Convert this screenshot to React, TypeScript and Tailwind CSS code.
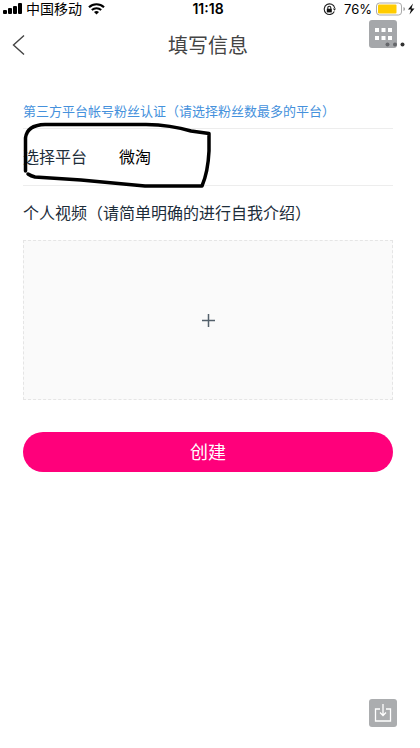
import React from 'react';

function StatusBar() {
  return (
    <div className="grid h-[18px] grid-cols-[1fr_auto_1fr] items-center text-black">
      <div className="flex items-center pl-[3px]">
        <svg width="19" height="12" viewBox="0 0 19 12" aria-hidden="true">
          <rect x="0" y="7" width="4" height="4" rx="1" />
          <rect x="5" y="5" width="4" height="6" rx="1" />
          <rect x="10" y="3" width="4" height="8" rx="1" />
          <rect x="15" y="0" width="4" height="11" rx="1" />
        </svg>
        <span className="ml-1 text-[14px] leading-[18px]">中国移动</span>
        <svg className="ml-1.5" width="17" height="12" viewBox="0 0 17 12" fill="none" stroke="#000" aria-hidden="true">
          <path d="M1 4.2a11 11 0 0 1 15 0" strokeWidth="2.2" />
          <path d="M3.8 7a7 7 0 0 1 9.4 0" strokeWidth="2" />
          <path d="M6 9a4 4 0 0 1 5 0L8.500 11.600z" fill="#000" stroke="none" />
        </svg>
      </div>
      <time className="font-['Inter','Liberation_Sans',sans-serif] text-[14px] leading-[18px] font-semibold">11:18</time>
      <div className="flex items-center justify-end">
        <svg width="13" height="13" viewBox="0 0 13 13" fill="none" stroke="#222" aria-hidden="true">
          <path d="M11.300 8.500A5.300 5.300 0 1 1 11.700 5" strokeWidth="1.1" />
          <path d="M9.800 5.500h3.200L11.500 7.800z" fill="#222" stroke="none" />
          <rect x="3.800" y="5.800" width="5" height="3.600" fill="#111" stroke="none" />
          <path d="M4.800 6V4.700a1.500 1.500 0 0 1 3 0V6" strokeWidth="1.1" />
        </svg>
        <span className="ml-2 font-['Inter','Liberation_Sans',sans-serif] text-[13px] leading-[18px]">76%</span>
        <svg className="ml-1" width="40" height="14" viewBox="0 0 40 14" aria-hidden="true">
          <rect x="0.5" y="1" width="25" height="12" rx="3" fill="#fff" stroke="#aaa" />
          <rect x="2" y="2.500" width="18.500" height="9" rx="1" fill="#fc0" />
          <path d="M27.500 5v4q1.500-.5 1.500-2t-1.500-2" fill="#999" />
          <path d="M37 1.500 32 7.500h3l-1.500 5 5-6h-3z" fill="#111" />
        </svg>
      </div>
    </div>
  );
}

function Header() {
  return (
    <header className="relative grid h-[54px] grid-cols-[1fr_auto_1fr] items-center">
      <button type="button" aria-label="返回" className="ml-3 w-3">
        <svg width="13" height="22" viewBox="0 0 13 22" fill="none" stroke="#444" strokeWidth="1.4">
          <path d="M12 1.500 1.500 11 12 20.500" />
        </svg>
      </button>
      <h1 className="pt-0.5 text-[20px] leading-7 text-[#444]">填写信息</h1>
      <button
        type="button"
        aria-label="应用"
        className="absolute top-[2px] right-[19px] grid size-7 place-items-center rounded-[3px] bg-[#a5a7aa]"
      >
        <svg width="17" height="13" viewBox="0 0 17 13" fill="#fff">
          <path d="M0 0h4v4H0zM6.500 0h4v4h-4zM13 0h4v4h-4zM0 8h4v4H0zM6.500 8h4v4h-4zM13 8h4v4h-4z" />
        </svg>
      </button>
      <button type="button" aria-label="更多" className="absolute top-6 right-[11px]">
        <svg width="20" height="5" viewBox="0 0 20 5">
          <circle cx="2.500" cy="2.500" r="2" fill="#65676b" />
          <circle cx="10" cy="2.500" r="2" fill="#65676b" />
          <circle cx="17.500" cy="2.500" r="2" fill="#333" />
        </svg>
      </button>
    </header>
  );
}

function PlatformRow() {
  return (
    <div className="relative flex h-[58px] items-center border-y border-[#ededed] pt-0.5 text-[16px] leading-6 text-[#1d2d3a]">
      <label htmlFor="platform" className="w-24 shrink-0">选择平台</label>
      <select id="platform" className="h-10 min-w-0 flex-1 appearance-none bg-transparent text-black outline-none">
        <option>微淘</option>
      </select>
      <svg
        className="pointer-events-none absolute -top-[9px] left-0"
        width="192"
        height="70"
        viewBox="0 0 192 70"
        fill="none"
        stroke="#000"
        strokeWidth="3.5"
        strokeLinecap="round"
        strokeLinejoin="round"
        aria-hidden="true"
      >
        <path d="M2.500 51V18Q4 5 22 4.500H123Q148 5 168 11L186 13.500V31Q185 52 179 66H122L90 63 58 60 12 57Q8 56 5 54" />
      </svg>
    </div>
  );
}

export default function App() {
  return (
    <div className="relative min-h-screen bg-white pr-1 font-['Liberation_Sans','Noto_Sans_CJK_SC',sans-serif]">
      <StatusBar />
      <Header />
      <main className="px-[23px] pt-[30px]">
        <form onSubmit={(event) => event.preventDefault()}>
          <h2 className="pb-1.5 text-[13px] leading-5 text-[#4591dc]">
            第三方平台帐号粉丝认证（请选择粉丝数最多的平台）
          </h2>
          <PlatformRow />
          <p id="video-label" className="pt-4 pb-3.5 text-[16px] leading-6 text-[#1d2d3a]">
            个人视频（请简单明确的进行自我介绍）
          </p>
          <button
            type="button"
            aria-labelledby="video-label"
            className="grid h-40 w-full place-items-center border border-dashed border-[#e5e5e5] bg-[#fafafa]"
          >
            <svg width="13" height="13" viewBox="0 0 13 13" stroke="#53606b" strokeWidth="1.5">
              <path d="M0 6.500h13M6.500 0v13" />
            </svg>
          </button>
          <button type="submit" className="mt-8 h-10 w-full rounded-full bg-[#ff007b] pt-0.5 text-[18px] leading-6 text-white">
            创建
          </button>
        </form>
      </main>
      <button
        type="button"
        aria-label="下载"
        className="absolute right-[23px] bottom-[21px] grid size-7 place-items-center rounded-[3px] bg-[#abadaf]"
      >
        <svg width="18" height="18" viewBox="0 0 18 18" fill="none" stroke="#fff" strokeWidth="1.3">
          <path d="M6 5H1.500v12h15V5H12M9 0v11M6 8.500l3 3 3-3" />
        </svg>
      </button>
    </div>
  );
}
